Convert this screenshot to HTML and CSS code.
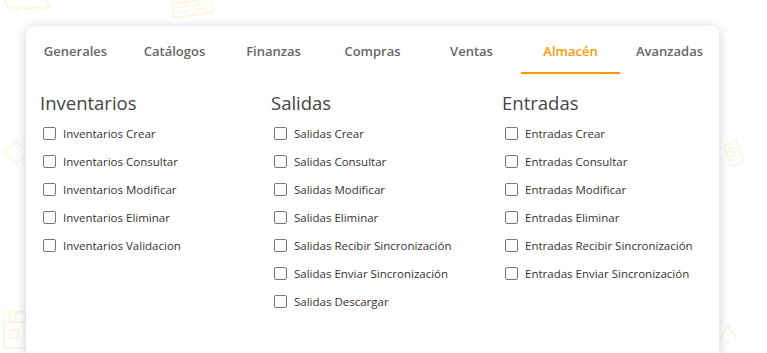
FILE: index.html
```html
<!DOCTYPE html>
<html lang="es">
<head>
<meta charset="UTF-8">
<meta name="viewport" content="width=device-width, initial-scale=1.0">
<title>Permisos - Almacén</title>
<link rel="stylesheet" href="styles.css">
</head>
<body>
<!-- iconos decorativos del fondo -->
<div class="bg-icons">
    <svg class="bg-icon i1" width="50" height="14" viewBox="0 0 50 14"><path d="M2 0 L44 0 L48 10 L6 10 Z M16 10 L14 14 M34 10 L36 14" /></svg>
    <svg class="bg-icon i2" width="46" height="18" viewBox="0 0 46 18"><rect x="3" y="1" width="40" height="14" rx="2"/><path d="M8 5h10M8 10h10M26 5h10M26 10h10"/></svg>
    <svg class="bg-icon i3" width="24" height="30" viewBox="0 0 24 30"><path d="M2 8 L14 2 L22 24 L10 28 Z M6 10h6M8 14h6M8 18h6"/></svg>
    <svg class="bg-icon i4" width="30" height="38" viewBox="0 0 30 38"><path d="M2 12 L14 2 L28 12 L14 24 Z"/></svg>
    <svg class="bg-icon i5" width="26" height="40" viewBox="0 0 26 40"><path d="M2 2h22v10H2zM8 2v10M14 2v10M2 12v26h22M8 20h8v8H8z"/></svg>
    <svg class="bg-icon i6" width="20" height="40" viewBox="0 0 20 40"><path d="M2 38 L10 26 L18 38"/></svg>
</div>

<div class="card">
    <nav class="tabs">
        <a href="#">Generales</a>
        <a href="#">Catálogos</a>
        <a href="#">Finanzas</a>
        <a href="#">Compras</a>
        <a href="#">Ventas</a>
        <a href="#" class="active">Almacén</a>
        <a href="#">Avanzadas</a>
    </nav>

    <div class="columns">
        <div class="group">
            <h2>Inventarios</h2>
            <label><input type="checkbox"> Inventarios Crear</label>
            <label><input type="checkbox"> Inventarios Consultar</label>
            <label><input type="checkbox"> Inventarios Modificar</label>
            <label><input type="checkbox"> Inventarios Eliminar</label>
            <label><input type="checkbox"> Inventarios Validacion</label>
        </div>
        <div class="group">
            <h2>Salidas</h2>
            <label><input type="checkbox"> Salidas Crear</label>
            <label><input type="checkbox"> Salidas Consultar</label>
            <label><input type="checkbox"> Salidas Modificar</label>
            <label><input type="checkbox"> Salidas Eliminar</label>
            <label><input type="checkbox"> Salidas Recibir Sincronización</label>
            <label><input type="checkbox"> Salidas Enviar Sincronización</label>
            <label><input type="checkbox"> Salidas Descargar</label>
        </div>
        <div class="group">
            <h2>Entradas</h2>
            <label><input type="checkbox"> Entradas Crear</label>
            <label><input type="checkbox"> Entradas Consultar</label>
            <label><input type="checkbox"> Entradas Modificar</label>
            <label><input type="checkbox"> Entradas Eliminar</label>
            <label><input type="checkbox"> Entradas Recibir Sincronización</label>
            <label><input type="checkbox"> Entradas Enviar Sincronización</label>
        </div>
    </div>
</div>
</body>
</html>
```

FILE: styles.css
```css
body {
    font-family: 'Open Sans', 'Noto Sans', sans-serif;
    background: #ffffff;
    margin: 0;
    padding: 26px 0 0 26px;
    color: #333;
    overflow: hidden;
    height: 353px;
    box-sizing: border-box;
}
.bg-icons {
    position: absolute;
    top: 0;
    left: 0;
    width: 100%;
    height: 100%;
}
.bg-icon {
    position: absolute;
    fill: none;
    stroke: #fdf4dc;
    stroke-width: 1.5;
}
.i1 { left: 2px; top: -2px; }
.i2 { left: 170px; top: 0; transform: rotate(-8deg); }
.i3 { left: 722px; top: 138px; }
.i4 { left: 2px; top: 140px; }
.i5 { left: 2px; top: 310px; }
.i6 { left: 718px; top: 300px; }
.card {
    position: relative;
    background: #fff;
    width: 693px;
    height: 327px;
    border-radius: 8px 8px 0 0;
    box-shadow: 0 2px 12px rgba(0,0,0,0.2);
}
.tabs {
    display: grid;
    grid-template-columns: repeat(7, 1fr);
    height: 48px;
}
.tabs a {
    display: flex;
    justify-content: center;
    align-items: center;
    text-decoration: none;
    color: #666;
    font-weight: 600;
    font-size: 13px;
    border-bottom: 2px solid transparent;
    padding-top: 4px;
}
.tabs a.active {
    color: #ff9800;
    border-bottom-color: #ff9800;
}
.columns {
    display: grid;
    grid-template-columns: repeat(3, 231px);
    padding: 16px 14px 0;
}
.group h2 {
    font-size: 18.5px;
    font-weight: 400;
    color: #444;
    margin: 0 0 3px;
    line-height: 26px;
}
.group label {
    display: flex;
    align-items: center;
    height: 28px;
    font-size: 11.5px;
    color: #333;
    padding-left: 3px;
}
.group input {
    appearance: none;
    width: 13px;
    height: 13px;
    margin: 0 7px 0 0;
    border: 1px solid #777;
    border-radius: 2px;
    background: #fff;
}
```
